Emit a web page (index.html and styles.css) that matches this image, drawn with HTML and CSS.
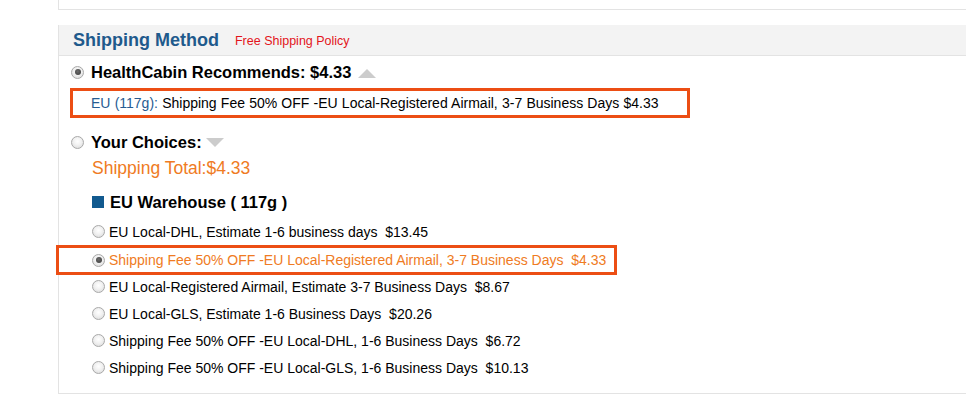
FILE: index.html
```html
<!DOCTYPE html>
<html lang="en">
<head>
<meta charset="utf-8">
<title>Shipping Method</title>
<link rel="stylesheet" href="styles.css">
</head>
<body>
<div class="page">
  <div class="prev-box"></div>
  <section class="ship">
    <header class="ship-head">
      <h2 class="ship-title">Shipping Method</h2>
      <a class="policy" href="#">Free Shipping Policy</a>
    </header>
    <div class="ship-body">
      <div class="choice">
        <span class="radio checked"></span>
        <span class="choice-label">HealthCabin Recommends: $4.33</span>
        <span class="tri tri-up"></span>
      </div>
      <div class="rec-box">
        <span class="rec-zone">EU (117g):</span> Shipping Fee 50% OFF -EU Local-Registered Airmail, 3-7 Business Days $4.33
      </div>

      <div class="choice choice-2">
        <span class="radio"></span>
        <span class="choice-label">Your Choices:</span>
        <span class="tri tri-down"></span>
      </div>
      <div class="total">Shipping Total:$4.33</div>

      <div class="warehouse">
        <span class="wh-square"></span>
        <span class="wh-label">EU Warehouse ( 117g )</span>
      </div>

      <ul class="options">
        <li class="opt"><span class="radio"></span>EU Local-DHL, Estimate 1-6 business days&nbsp; $13.45</li>
        <li class="opt opt-selected"><span class="radio checked"></span>Shipping Fee 50% OFF -EU Local-Registered Airmail, 3-7 Business Days&nbsp; $4.33</li>
        <li class="opt"><span class="radio"></span>EU Local-Registered Airmail, Estimate 3-7 Business Days&nbsp; $8.67</li>
        <li class="opt"><span class="radio"></span>EU Local-GLS, Estimate 1-6 Business Days&nbsp; $20.26</li>
        <li class="opt"><span class="radio"></span>Shipping Fee 50% OFF -EU Local-DHL, 1-6 Business Days&nbsp; $6.72</li>
        <li class="opt"><span class="radio"></span>Shipping Fee 50% OFF -EU Local-GLS, 1-6 Business Days&nbsp; $10.13</li>
      </ul>
    </div>
  </section>
</div>
</body>
</html>
```

FILE: styles.css
```css
* { box-sizing: border-box; }

html, body {
  margin: 0;
  padding: 0;
  background: #ffffff;
  font-family: "Liberation Sans", Arial, sans-serif;
  color: #000;
  overflow: hidden;
}

.page {
  margin-left: 58px;
  width: 940px;
}

.prev-box {
  height: 10px;
  border-left: 1px solid #e3e3e3;
  border-bottom: 1px solid #e3e3e3;
}

.ship {
  margin-top: 15px;
  border-left: 1px solid #e3e3e3;
  border-bottom: 1px solid #e3e3e3;
  padding-bottom: 12px;
}

.ship-head {
  height: 31px;
  background: #f3f3f3;
  border-bottom: 1px solid #e3e3e3;
  display: flex;
  align-items: center;
  padding-left: 14px;
}

.ship-title {
  margin: 0;
  font-size: 18px;
  font-weight: bold;
  color: #1f5a8c;
}

.policy {
  margin-left: 16px;
  margin-top: 2px;
  font-size: 12.5px;
  color: #e3141b;
  text-decoration: none;
}

.ship-body {
  padding-top: 6px;
}

.choice {
  display: flex;
  align-items: center;
  height: 20px;
  padding-left: 12px;
}

.choice-2 {
  margin-top: 14px;
}

.choice-label {
  margin-left: 7px;
  font-size: 16.5px;
  font-weight: bold;
  line-height: 20px;
}

.radio {
  display: inline-block;
  flex: none;
  width: 13px;
  height: 13px;
  border-radius: 50%;
  border: 1px solid #a9a9a9;
  background: radial-gradient(circle at 50% 40%, #ffffff 0%, #f1f1f1 45%, #d6d6d6 100%);
  position: relative;
}

.radio.checked::after {
  content: "";
  position: absolute;
  left: 2.5px;
  top: 2.5px;
  width: 6px;
  height: 6px;
  border-radius: 50%;
  background: radial-gradient(circle at 45% 40%, #6b6b6b 0%, #3a3a3a 100%);
}

.tri {
  display: inline-block;
  width: 0;
  height: 0;
  margin-left: 6px;
  border-left: 9px solid transparent;
  border-right: 9px solid transparent;
}

.tri-up {
  border-bottom: 9px solid #cccccc;
  margin-top: 2px;
  margin-left: 7px;
}

.tri-down {
  border-top: 9px solid #cccccc;
  margin-top: 0;
  margin-left: 4px;
}

.rec-box {
  width: fit-content;
  margin-top: 6px;
  margin-left: 11px;
  height: 30px;
  border: 3px solid #ec4e14;
  padding: 0 28px 0 18px;
  font-size: 14px;
  word-spacing: 0.3px;
  line-height: 24px;
  color: #000;
}

.rec-zone {
  color: #275c92;
}

.total {
  margin-top: 6px;
  padding-left: 33px;
  font-size: 17.5px;
  font-weight: normal;
  line-height: 20px;
  color: #ef7b23;
}

.warehouse {
  margin-top: 14px;
  padding-left: 33px;
  display: flex;
  align-items: center;
  height: 20px;
}

.wh-square {
  width: 12px;
  height: 12px;
  background: #125a8f;
  flex: none;
}

.wh-label {
  margin-left: 6px;
  font-size: 16.5px;
  font-weight: bold;
}

.options {
  list-style: none;
  margin: 6px 0 0 0;
  padding: 0;
}

.opt {
  display: flex;
  align-items: center;
  height: 27px;
  padding-left: 33px;
  font-size: 14px;
  white-space: nowrap;
}

.opt .radio {
  margin-right: 4px;
}

.opt-selected {
  width: fit-content;
  height: 30px;
  margin-left: -3px;
  margin-bottom: -2px;
  padding-left: 33px;
  padding-right: 8px;
  border: 3px solid #ec4e14;
  color: #ef7b23;
}
```
